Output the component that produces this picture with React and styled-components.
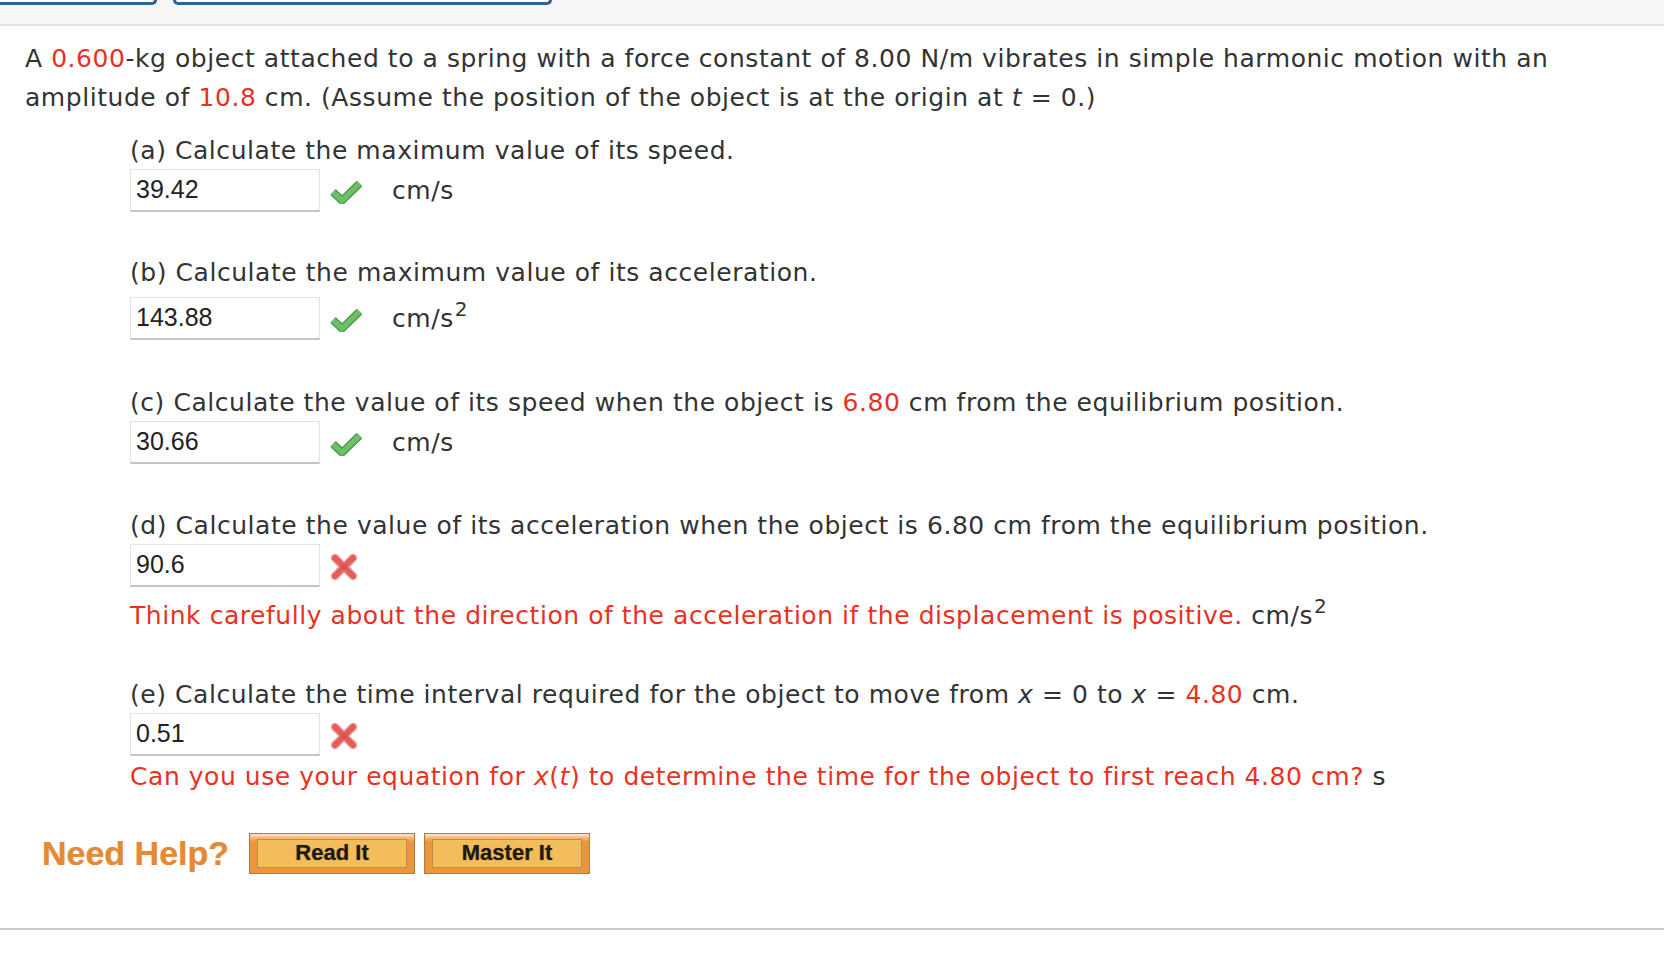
import React from 'react';
import styled, { createGlobalStyle } from 'styled-components';

const GlobalStyle = createGlobalStyle`
  body {
    margin: 0;
    background: #fff;
    font-family: "DejaVu Sans", Verdana, sans-serif;
    color: #333;
  }
`;

const TopBar = styled.div`
  display: flex;
  align-items: flex-start;
  gap: 16px;
  height: 24px;
  background: #f6f6f6;
  border-bottom: 2px solid #e0e0e0;
  overflow: hidden;
`;

const Tab = styled.div`
  flex: none;
  width: ${p => p.width}px;
  margin-left: ${p => p.offset || 0}px;
  height: 2px;
  background: #fff;
  border: 3px solid #2e6298;
  border-top: none;
  border-radius: 0 0 7px 7px;
`;

const Page = styled.div`
  padding: 13px 25px 0;
`;

const Text = styled.div`
  font-size: 25px;
  letter-spacing: 0.55px;
`;

const Intro = styled(Text)`
  line-height: 39px;
  max-width: 1560px;
`;

const Red = styled.span`
  color: #e8321f;
`;

const Var = styled.i`
  font-style: italic;
`;

const Sup = styled.sup`
  font-size: 0.8em;
  line-height: 0;
  position: relative;
  top: -0.55em;
  vertical-align: baseline;
  margin-left: 1px;
`;

const Parts = styled.div`
  margin-left: 105px;
`;

const PartLabel = styled(Text)`
  line-height: 36px;
  margin-top: ${p => p.gap}px;
`;

const AnswerRow = styled.div`
  display: flex;
  align-items: center;
  height: 43px;
  margin-top: ${p => p.gap || 0}px;
`;

const AnswerBox = styled.div`
  box-sizing: border-box;
  width: 190px;
  height: 43px;
  display: flex;
  align-items: center;
  padding-left: 5px;
  border: 1px solid #e2e2e2;
  border-bottom: 2px solid #c4c4c4;
  background: #fff;
  font-family: "Liberation Sans", Arial, sans-serif;
  font-size: 25px;
  color: #222;
`;

const Mark = styled.span`
  display: flex;
  margin-left: 10px;
  margin-top: ${p => p.drop || 0}px;
`;

const Unit = styled(Text)`
  margin-left: 30px;
`;

const Feedback = styled(Text)`
  line-height: 38px;
  color: #e8321f;
  margin-top: ${p => p.gap}px;
`;

const Plain = styled.span`
  color: #333;
`;

const HelpRow = styled.div`
  display: flex;
  align-items: center;
  margin: 37px 0 0 42px;
  height: 41px;
`;

const HelpText = styled.span`
  font-family: "Liberation Sans", Arial, sans-serif;
  font-weight: bold;
  font-size: 34px;
  color: #e38a38;
  text-shadow: 0 0 1px rgba(227, 138, 56, 0.6);
  margin-right: 20px;
`;

const HelpButton = styled.div`
  box-sizing: border-box;
  width: 166px;
  height: 41px;
  padding: 5px 7px 5px;
  margin-right: 9px;
  border: 1.5px solid #ad7843;
  background: linear-gradient(#fbe6d8 0, #f0b878 4px, #e9963f 8px, #e9963f 100%);
  display: flex;
`;

const ButtonFace = styled.div`
  flex: 1;
  display: flex;
  align-items: center;
  justify-content: center;
  border: 1.5px solid #c28a4f;
  background: #f2bd5a;
  font-family: "Liberation Sans", Arial, sans-serif;
  font-weight: bold;
  font-size: 22px;
  color: #1e1a12;
  text-shadow: 0 0 1px rgba(0, 0, 0, 0.5);
`;

const BottomRule = styled.div`
  height: 2px;
  background: #cccccc;
  margin-top: 54px;
`;

const CheckIcon = () => (
  <svg width="32" height="24" viewBox="0 0 32 24">
    <path d="M3 12 L12 20.5 L29.5 3.5" fill="none" stroke="#4c9c4c" strokeWidth="8" strokeLinejoin="miter" />
    <path d="M3 12 L12 20.5 L29.5 3.5" fill="none" stroke="#6cc06c" strokeWidth="5" strokeLinejoin="miter" />
  </svg>
);

const CrossIcon = () => (
  <svg width="28" height="28" viewBox="0 0 28 28">
    <path d="M5 5 L23 23 M23 5 L5 23" stroke="#f1a9a8" strokeWidth="8.5" strokeLinecap="round" />
    <path d="M5 5 L23 23 M23 5 L5 23" stroke="#e15e5c" strokeWidth="6" strokeLinecap="round" />
    <circle cx="14" cy="14" r="2.5" fill="#d84e4c" />
  </svg>
);

const Answer = ({ value, correct, unit, gap }) => (
  <AnswerRow gap={gap}>
    <AnswerBox>{value}</AnswerBox>
    <Mark drop={4}>{correct ? <CheckIcon /> : <CrossIcon />}</Mark>
    {unit && <Unit>{unit}</Unit>}
  </AnswerRow>
);

const App = () => {
  return (
    <>
      <GlobalStyle />
      <TopBar>
        <Tab width={171} offset={-20} />
        <Tab width={373} />
      </TopBar>
      <Page>
        <Intro>
          A <Red>0.600</Red>-kg object attached to a spring with a force constant of 8.00 N/m vibrates in simple harmonic motion with an
          amplitude of <Red>10.8</Red> cm. (Assume the position of the object is at the origin at <Var>t</Var> = 0.)
        </Intro>

        <Parts>
          <PartLabel gap={15.7}>(a) Calculate the maximum value of its speed.</PartLabel>
          <Answer value="39.42" correct unit="cm/s" />

          <PartLabel gap={43}>(b) Calculate the maximum value of its acceleration.</PartLabel>
          <Answer value="143.88" correct gap={6} unit={<>cm/s<Sup>2</Sup></>} />

          <PartLabel gap={45}>
            (c) Calculate the value of its speed when the object is <Red>6.80</Red> cm from the equilibrium position.
          </PartLabel>
          <Answer value="30.66" correct unit="cm/s" />

          <PartLabel gap={44}>
            (d) Calculate the value of its acceleration when the object is 6.80 cm from the equilibrium position.
          </PartLabel>
          <Answer value="90.6" />
          <Feedback gap={10}>
            Think carefully about the direction of the acceleration if the displacement is positive.{' '}
            <Plain>cm/s<Sup>2</Sup></Plain>
          </Feedback>

          <PartLabel gap={42}>
            (e) Calculate the time interval required for the object to move from <Var>x</Var> = 0 to <Var>x</Var> ={' '}
            <Red>4.80</Red> cm.
          </PartLabel>
          <Answer value="0.51" />
          <Feedback gap={2}>
            Can you use your equation for <Var>x</Var>(<Var>t</Var>) to determine the time for the object to first reach 4.80 cm?{' '}
            <Plain>s</Plain>
          </Feedback>
        </Parts>
      </Page>

      <HelpRow>
        <HelpText>Need Help?</HelpText>
        <HelpButton><ButtonFace>Read It</ButtonFace></HelpButton>
        <HelpButton><ButtonFace>Master It</ButtonFace></HelpButton>
      </HelpRow>
      <BottomRule />
    </>
  );
};

export default App;
